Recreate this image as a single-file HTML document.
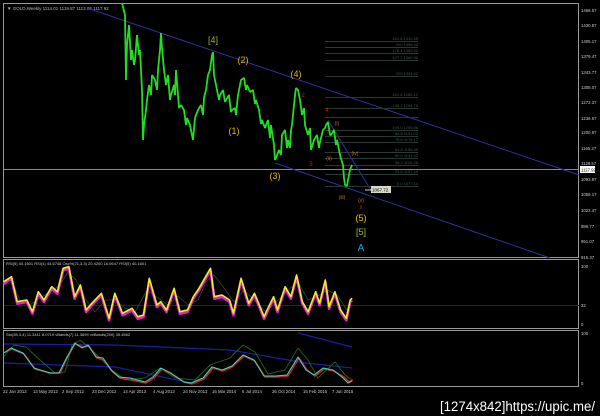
<!DOCTYPE html>
<html><head><meta charset="utf-8"><style>
html,body{margin:0;padding:0;background:#000;width:600px;height:416px;overflow:hidden}
svg{display:block}
text{font-family:"Liberation Sans",sans-serif}
</style></head><body>
<svg width="600" height="416" viewBox="0 0 600 416" xmlns="http://www.w3.org/2000/svg">
<rect width="600" height="416" fill="#000"/>
<g stroke="#9a9a9a" stroke-width="1" fill="none">
<rect x="3.5" y="3.5" width="575" height="254"/>
<rect x="3.5" y="259.5" width="575" height="69"/>
<rect x="3.5" y="330.5" width="575" height="56"/>
</g>
<text x="7" y="10" font-size="4.5" fill="#bbb">▼ GOLD,Weekly  1114.01  1119.87  1113.06  1117.92</text>
<line x1="4" y1="169.5" x2="579" y2="169.5" stroke="#8a8a8a" stroke-width="1"/>
<g stroke="#30309a" stroke-width="1" fill="none">
<line x1="87" y1="8" x2="579" y2="175"/>
<line x1="275" y1="163" x2="550" y2="258"/>
<line x1="328" y1="120" x2="372" y2="192"/>
</g>
<g stroke="#2c3a36" stroke-width="1">
<line x1="325" y1="41.5" x2="418" y2="41.5"/><line x1="325" y1="47.5" x2="418" y2="47.5"/>
<line x1="325" y1="53.5" x2="418" y2="53.5"/><line x1="325" y1="60.5" x2="418" y2="60.5"/>
<line x1="325" y1="76.5" x2="418" y2="76.5"/><line x1="325" y1="97.5" x2="418" y2="97.5"/>
<line x1="325" y1="108.5" x2="418" y2="108.5"/><line x1="325" y1="117.5" x2="418" y2="117.5"/>
<line x1="325" y1="130.5" x2="418" y2="130.5"/><line x1="325" y1="136.5" x2="418" y2="136.5"/>
<line x1="325" y1="142.5" x2="418" y2="142.5"/><line x1="325" y1="152.5" x2="418" y2="152.5"/>
<line x1="325" y1="158.5" x2="418" y2="158.5"/><line x1="325" y1="165.5" x2="418" y2="165.5"/>
<line x1="325" y1="174.5" x2="418" y2="174.5"/><line x1="325" y1="186.5" x2="418" y2="186.5"/>
</g>
<g font-size="4" fill="#44554f" text-anchor="end">
<text x="418" y="40">161.8 1412.65</text><text x="418" y="46">200 1396.46</text>
<text x="418" y="52">176.4 1385.51</text><text x="418" y="59">127.2 1365.30</text>
<text x="418" y="75">200 1334.62</text><text x="418" y="96">161.8 1285.12</text>
<text x="418" y="107">138.2 1254.79</text><text x="418" y="129">100.0 1205.66</text>
<text x="418" y="135">88.6 1191.02</text><text x="418" y="141">78.6 1178.17</text>
<text x="418" y="151">61.8 1156.59</text><text x="418" y="157">50.0 1141.43</text>
<text x="418" y="164">38.2 1126.26</text><text x="418" y="173">23.6 1107.49</text>
<text x="418" y="185">0.0 1077.14</text>
</g>
<polyline fill="none" stroke="#22dd22" stroke-width="1.8" stroke-linejoin="bevel" points="122,3 125,15 126,80 127,45 129,25 131,60 132,50 134,65 135,60 137,35 139,55 140,50 142,90 143,140 144,125 146,110 147,100 149,85 151,95 152,75 155,80 157,90 158,70 160,50 161,33 162,48 164,70 166,85 168,75 170,100 171,95 174,85 175,95 176,70 178,95 179,108 181,105 184,110 186,125 187,118 190,125 192,135 193,140 195,118 198,110 201,105 203,115 204,98 206,90 208,75 210,70 212,55 213,52 214,75 217,90 219,100 220,95 223,90 225,102 226,100 229,95 231,112 232,110 235,108 236,115 238,95 241,80 244,78 246,90 247,85 250,92 253,90 255,104 256,100 259,110 261,124 262,120 265,128 268,120 270,138 271,125 274,145 275,160 276,158 279,150 281,155 282,135 285,130 287,148 288,140 290,148 291,130 292,125 294,105 295,95 296,88 298,90 300,100 302,115 304,108 305,125 308,135 310,128 311,150 314,140 317,135 319,148 320,142 323,130 325,128 326,125 328,122 330,135 331,135 334,130 336,145 337,140 340,155 342,162 343,165 344,178 345,185 347,186 348,180 350,170 352,165"/>
<g font-size="4.3" fill="#ccc">
<text x="581" y="12">1466.57</text><text x="581" y="27">1430.87</text><text x="581" y="43">1405.17</text>
<text x="581" y="58">1379.47</text><text x="581" y="74">1343.77</text><text x="581" y="89">1308.07</text>
<text x="581" y="104">1272.37</text><text x="581" y="120">1236.67</text><text x="581" y="134">1200.97</text>
<text x="581" y="150">1165.27</text><text x="581" y="165">1129.57</text><text x="581" y="181">1093.87</text>
<text x="581" y="196">1058.17</text><text x="581" y="212">1022.47</text><text x="581" y="228">986.77</text>
<text x="581" y="243">951.07</text><text x="581" y="259">915.37</text>
<text x="581" y="268">100</text><text x="581" y="307">32</text><text x="581" y="326">0</text>
<text x="581" y="335">100</text><text x="581" y="385">0</text>
</g>
<rect x="580" y="166" width="15" height="7" fill="#fff"/>
<text x="581" y="171.5" font-size="4.3" fill="#000">1117.92</text>
<rect x="371" y="186" width="20" height="7" fill="#d8d8c8"/>
<line x1="365" y1="190" x2="371" y2="190" stroke="#ccc"/>
<text x="372" y="191.5" font-size="4.5" fill="#000">1067.72</text>
<g font-size="9" text-anchor="middle">
<text x="213" y="43" fill="#a0b040">[4]</text>
<text x="243" y="63" fill="#e8b818">(2)</text>
<text x="296" y="77" fill="#e8b818">(4)</text>
<text x="234" y="134" fill="#e8b818">(1)</text>
<text x="275" y="179" fill="#e8b818">(3)</text>
<text x="361" y="221" fill="#e8c818">(5)</text>
<text x="361" y="235" fill="#a0c040">[5]</text>
<text x="361" y="251" fill="#20a8e0" font-size="10">A</text>
</g>
<g font-size="6" text-anchor="middle" fill="#c02020">
<text x="303" y="97">2</text><text x="327" y="112">4</text><text x="311" y="166">3</text><text x="361" y="209">x</text>
</g>
<g font-size="5" text-anchor="middle" fill="#c07818">
<text x="337" y="125">(i)</text><text x="329" y="160">(ii)</text><text x="355" y="155">(iv)</text>
<text x="342" y="199">(iii)</text><text x="361" y="202">(v)</text>
</g>
<text x="6" y="265" font-size="4" fill="#ccc">RSI(5) 40.1601  RSI(4) 44.6748  Osc%(21,3,3) 20.4200  16.0647  RSI(5) 40.1601</text>
<line x1="4" y1="305.5" x2="579" y2="305.5" stroke="#202060" stroke-width="1"/>
<polyline fill="none" stroke="#2b4a3a" stroke-width="0.8" points="4,285 12,282 20,300 30,305 40,298 50,292 60,285 68,272 76,280 86,300 95,312 105,300 115,300 125,308 135,312 147,290 158,298 168,305 178,296 188,305 198,300 206,282 214,275 224,288 234,302 244,290 254,300 266,312 276,302 288,290 298,282 308,300 318,296 328,290 338,296 348,312"/>
<polyline fill="none" stroke="#e020e0" stroke-width="2.6" stroke-linejoin="round" points="3.8,283.7 11.5,278.7 17.2,303.7 26.8,302 32.5,313.7 38.3,293.7 44,302 51.7,288.7 57.4,293.7 63.1,270.3 68.9,268.7 74.6,298.7 80.4,287 86.1,312 91.8,305.3 101.4,295.3 109.1,320.3 114.8,295.3 122.5,315.3 132,310.3 137.8,318.7 143.5,317 149.3,280.3 156.9,307 160.7,303.7 166.5,312 174.1,290.3 179.9,313.7 187.5,312 193.3,298.7 199,290.3 204.7,280.3 210.5,270.3 214.3,298.7 222,297 229.6,302 233.4,315.3 241.1,280.3 248.8,305.3 254.5,295.3 264.1,318.7 267.9,310.3 273.6,298.7 277.5,312 285.1,288.7 290.9,298.7 296.6,277 302.3,303.7 308.1,313.7 315.7,293.7 319.6,305.3 325.3,282 329.1,308.7 334.9,293.7 340.6,312 346.3,320.3 350.2,302 352.1,300.3"/>
<polyline fill="none" stroke="#f0f020" stroke-width="1.6" stroke-linejoin="round" points="3.8,281.7 11.5,276.7 17.2,301.7 26.8,300 32.5,311.7 38.3,291.7 44,300 51.7,286.7 57.4,291.7 63.1,268.3 68.9,266.7 74.6,296.7 80.4,285 86.1,310 91.8,303.3 101.4,293.3 109.1,318.3 114.8,293.3 122.5,313.3 132,308.3 137.8,316.7 143.5,315 149.3,278.3 156.9,305 160.7,301.7 166.5,310 174.1,288.3 179.9,311.7 187.5,310 193.3,296.7 199,288.3 204.7,278.3 210.5,268.3 214.3,296.7 222,295 229.6,300 233.4,313.3 241.1,278.3 248.8,303.3 254.5,293.3 264.1,316.7 267.9,308.3 273.6,296.7 277.5,310 285.1,286.7 290.9,296.7 296.6,275 302.3,301.7 308.1,311.7 315.7,291.7 319.6,303.3 325.3,280 329.1,306.7 334.9,291.7 340.6,310 346.3,318.3 350.2,300 352.1,298.3"/>
<text x="6" y="336" font-size="4" fill="#ccc">Sto(55,3,4) 11.3411 8.0719  vBands(7) 11.3699  vvBands(200) 35.4562</text>
<g fill="none" stroke="#1c1ca8" stroke-width="1.2">
<polyline points="4,344 115,345 230,350 306,363 352,368"/>
<polyline points="298,333 352,347"/>
<polyline points="4,363 115,367 191,383"/>
</g>
<polyline fill="none" stroke="#1a6a1a" stroke-width="0.9" points="4,356 14,345 26,347 40,360 55,373 65,372 72,345 80,340 90,348 100,358 112,370 125,380 145,378 160,368 175,378 195,380 210,365 230,358 243,345 255,352 268,374 285,370 298,348 308,360 318,378 335,362 345,375 352,380"/>
<polyline fill="none" stroke="#d02020" stroke-width="1.6" stroke-linejoin="round" points="5,352 12,349 24,354 35,369 50,373 60,373 67,358 75,344 83,347 89,346 97,358 104,360 112,371 120,378 131,380 146,383 154,378 162,369 171,373 184,382 192,384 204,379 213,368 223,371 232,367 244,356 255,361 265,377 276,377 288,376 299,358 307,370 315,376 324,369 334,371 344,377 349,382 353,380"/>
<polyline fill="none" stroke="#30e0d0" stroke-width="1" stroke-linejoin="round" points="4,353 11,348 23,353 34,368 50,373 59,373 67,357 75,343 82,348 88,345 96,357 103,358 111,370 119,377 130,378 145,382 153,377 161,368 170,373 184,382 191,383 203,378 212,367 222,370 232,366 243,355 254,360 264,376 276,376 287,375 298,357 306,370 314,375 323,368 333,370 342,377 348,383 352,381"/>
<g font-size="4.3" fill="#ccc">
<text x="3" y="393">22 Jan 2012</text><text x="33" y="393">13 May 2012</text><text x="62" y="393">2 Sep 2012</text>
<text x="92" y="393">23 Dec 2012</text><text x="123" y="393">14 Apr 2013</text><text x="153" y="393">4 Aug 2013</text>
<text x="183" y="393">24 Nov 2013</text><text x="212" y="393">16 Mar 2014</text><text x="242" y="393">6 Jul 2014</text>
<text x="272" y="393">26 Oct 2014</text><text x="303" y="393">15 Feb 2015</text><text x="332" y="393">7 Jun 2015</text>
</g>
<text x="440" y="411" font-size="13.5" fill="#fff" textLength="155" lengthAdjust="spacingAndGlyphs">[1274x842]https://upic.me/</text>
</svg>
</body></html>
